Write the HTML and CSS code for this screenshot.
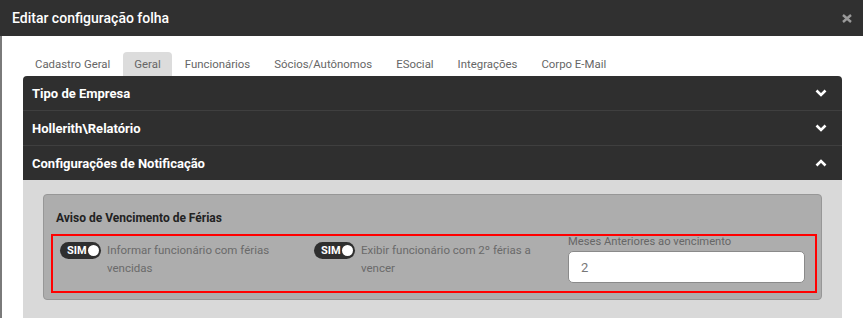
FILE: index.html
```html
<!DOCTYPE html>
<html lang="pt-BR">
<head>
  <meta charset="UTF-8" />
  <meta name="viewport" content="width=device-width, initial-scale=1" />
  <title>Editar configuração folha</title>
  <link rel="stylesheet" href="styles.css">
</head>
<body>

<!-- cabeçalho do modal -->
<div class="modal-header">
  <span class="modal-title">Editar configuração folha</span>
  <svg class="close" width="10" height="9" viewBox="0 0 10 9">
    <path d="M1 1 L9 8 M9 1 L1 8" stroke="#9a9a9a" stroke-width="2.4" fill="none" />
  </svg>
</div>

<div class="modal-body">
  <ul class="tabs">
    <li>Cadastro Geral</li>
    <li class="active">Geral</li>
    <li>Funcionários</li>
    <li>Sócios/Autônomos</li>
    <li>ESocial</li>
    <li>Integrações</li>
    <li>Corpo E-Mail</li>
  </ul>

  <div class="accordion">
    <div class="acc-header">
      <span>Tipo de Empresa</span>
      <svg width="12" height="8" viewBox="0 0 12 8"><path d="M1.5 1.5 L6 6 L10.5 1.5" stroke="#fff" stroke-width="2.6" fill="none" /></svg>
    </div>
    <div class="acc-header">
      <span>Hollerith\Relatório</span>
      <svg width="12" height="8" viewBox="0 0 12 8"><path d="M1.5 1.5 L6 6 L10.5 1.5" stroke="#fff" stroke-width="2.6" fill="none" /></svg>
    </div>
    <div class="acc-header open">
      <span>Configurações de Notificação</span>
      <svg width="12" height="8" viewBox="0 0 12 8"><path d="M1.5 6.5 L6 2 L10.5 6.5" stroke="#fff" stroke-width="2.6" fill="none" /></svg>
    </div>

    <div class="acc-panel">
      <div class="fieldset">
        <div class="fieldset-title">Aviso de Vencimento de Férias</div>
        <div class="highlight">
          <div class="col col-switch">
            <span class="switch">SIM<i class="knob"></i></span>
            <span class="switch-label">Informar funcionário com férias vencidas</span>
          </div>
          <div class="col col-switch">
            <span class="switch">SIM<i class="knob"></i></span>
            <span class="switch-label">Exibir funcionário com 2º férias a vencer</span>
          </div>
          <div class="col col-input">
            <label>Meses Anteriores ao vencimento</label>
            <input type="text" value="2" />
          </div>
        </div>
      </div>
    </div>
  </div>
</div>

</body>
</html>
```

FILE: styles.css
```css
body, html {
  margin: 0;
  padding: 0;
  height: 100%;
  font-family: Roboto, 'Liberation Sans', sans-serif;
  background: #fff;
  overflow: hidden;
}

.modal-header {
  height: 36px;
  background: #303030;
  display: flex;
  align-items: center;
  justify-content: space-between;
  padding: 0 11px 0 12px;
}

.modal-title {
  color: #fff;
  font-size: 14px;
  font-weight: 500;
}

.close {
  display: block;
  margin-top: 1px;
}

.modal-body {
  border-left: 2px solid #7a7a7a;
  padding: 16px 21px 0 21px;
  height: calc(100% - 36px);
  box-sizing: border-box;
}

.tabs {
  list-style: none;
  margin: 0;
  padding: 0 0 0 1px;
  display: flex;
}

.tabs li {
  font-size: 11.4px;
  color: #666;
  line-height: 24px;
  padding: 0 11px;
  margin-right: 2px;
  border-radius: 4px 4px 0 0;
}

.tabs li.active {
  background: #dcdcdc;
}

.accordion {
  border-radius: 4px 4px 0 0;
  overflow: hidden;
}

.acc-header {
  height: 34px;
  background: #2f2f2f;
  border-bottom: 1px solid #3f3f3f;
  display: flex;
  align-items: center;
  justify-content: space-between;
  padding: 0 15px 0 9px;
  color: #fff;
  font-size: 13px;
  font-weight: 700;
}

.acc-header.open {
  border-bottom: none;
}

.acc-panel {
  background: #d9d9d9;
  padding: 14px 20px 30px;
}

.fieldset {
  background: #adadad;
  border: 1px solid #979797;
  border-radius: 4px;
  padding: 14px 4px 6px 7px;
}

.fieldset-title {
  font-size: 12px;
  font-weight: 700;
  color: #222;
  line-height: 18px;
  padding-left: 5px;
  margin-bottom: 7px;
}

.highlight {
  border: 2px solid #f00;
  display: grid;
  grid-template-columns: 1fr 1fr 1fr;
  padding-bottom: 8px;
}

.col {
  padding: 0 7px;
}

.col-switch {
  display: flex;
  align-items: flex-start;
  gap: 6px;
  padding-top: 5px;
}

.switch {
  flex: none;
  position: relative;
  width: 41px;
  height: 17px;
  margin-top: 1px;
  box-sizing: border-box;
  border-radius: 9px;
  background: #2f2f2f;
  color: #fff;
  font-size: 11px;
  font-weight: 700;
  line-height: 17px;
  padding-left: 7px;
}

.knob {
  position: absolute;
  right: 2px;
  top: 3px;
  width: 11px;
  height: 11px;
  border-radius: 50%;
  background: #fff;
}

.switch-label {
  font-size: 11.5px;
  line-height: 18px;
  color: #6a6a6a;
}

.col-input {
  padding-right: 10px;
}

.col-input label {
  display: block;
  font-size: 11.2px;
  line-height: 12px;
  color: #666;
  margin-bottom: 3px;
}

.col-input input {
  display: block;
  width: 100%;
  box-sizing: border-box;
  height: 32px;
  border: 1px solid #8a8a8a;
  border-radius: 5px;
  background: #fff;
  padding: 0 12px;
  font-family: Roboto, 'Liberation Sans', sans-serif;
  font-size: 13px;
  color: #777;
}
```
